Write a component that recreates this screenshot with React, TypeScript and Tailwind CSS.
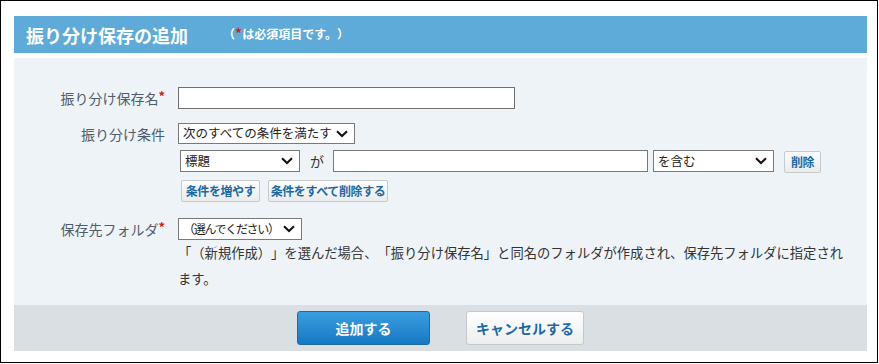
import React from 'react';

const Chevron = () => (
    <svg width="12" height="8" viewBox="0 0 12 8" className="shrink-0">
        <path d="M1 1.2 L6 6 L11 1.2" fill="none" stroke="#111" strokeWidth="2" />
    </svg>
);

const FakeSelect = ({ value, className, textClass = '' }: { value: string; className: string; textClass?: string }) => (
    <div
        className={`flex items-center justify-between bg-white border border-[#7a7a7a] pl-[4px] pr-[6px] text-[12.5px] text-[#222] leading-none whitespace-nowrap ${className}`}
    >
        <span className={textClass}>{value}</span>
        <Chevron />
    </div>
);

const SmallButton = ({ label, className }: { label: string; className: string }) => (
    <button
        className={`flex items-center justify-center h-[22px] rounded-[2px] border border-[#c6cacd] bg-gradient-to-b from-[#fdfdfd] to-[#e9ebec] text-[12px] tracking-[-0.4px] font-bold text-[#1b6aa5] leading-none whitespace-nowrap ${className}`}
    >
        {label}
    </button>
);

const Label = ({ text, required }: { text: string; required?: boolean }) => (
    <div className="w-[151px] shrink-0 text-right text-[14px] text-[#4f5d6b] leading-none whitespace-nowrap">
        {text}
        {required && <span className="relative -top-[3px] text-[13px] font-bold text-[#e3151b]">*</span>}
    </div>
);

export default function App() {
    return (
        <div className="w-[878px] h-[363px] border border-black bg-white pt-[15px] pl-[13px] font-[family-name:'Noto_Sans_CJK_JP',sans-serif] [text-spacing-trim:space-all]">
            <div className="w-[853px]">
                {/* Header */}
                <div className="h-[37px] bg-[#5eaad9] flex items-center pl-[12px]">
                    <h1 className="text-[18px] font-bold text-white leading-none">振り分け保存の追加</h1>
                    <span className="ml-[35px] text-[12px] font-bold text-white leading-none -mt-[4px]">
                        （<span className="text-[#e3151b] text-[14px]">*</span>は必須項目です。）
                    </span>
                </div>

                {/* Body */}
                <div className="mt-[5px] h-[247px] bg-[#eef3f7] pt-[29px]">
                    <div className="flex items-center">
                        <Label text="振り分け保存名" required />
                        <input className="ml-[13px] w-[337px] h-[22px] bg-white border border-[#6f6f6f] outline-none" />
                    </div>

                    <div className="flex mt-[14px]">
                        <div className="pt-[4px]">
                            <Label text="振り分け条件" />
                        </div>
                        <div className="ml-[13px] flex flex-col">
                            <FakeSelect value="次のすべての条件を満たす" className="w-[177px] h-[21px]" />
                            <div className="flex items-center mt-[5px] pl-[2px]">
                                <FakeSelect value="標題" className="w-[120px] h-[22px]" />
                                <span className="ml-[10px] text-[14px] text-[#333] leading-none">が</span>
                                <input className="ml-[9px] w-[315px] h-[22px] bg-white border border-[#7a7a7a] outline-none" />
                                <FakeSelect value="を含む" className="ml-[5px] w-[121px] h-[22px]" />
                                <SmallButton label="削除" className="ml-[10px] w-[37px] mt-[2px]" />
                            </div>
                            <div className="flex items-center gap-[8px] mt-[7px] pl-[3px]">
                                <SmallButton label="条件を増やす" className="w-[79px]" />
                                <SmallButton label="条件をすべて削除する" className="w-[120px]" />
                            </div>
                        </div>
                    </div>

                    <div className="flex mt-[16px]">
                        <div className="pt-[4px]">
                            <Label text="保存先フォルダ" required />
                        </div>
                        <div className="ml-[13px] flex flex-col">
                            <FakeSelect
                                value="（選んでください）"
                                className="w-[124px] h-[22px]"
                                textClass="text-[12px] tracking-[-1.3px]"
                            />
                            <p className="w-[675px] text-[13.3px] leading-[26px] text-[#333]">
                                「（新規作成）」を選んだ場合、「振り分け保存名」と同名のフォルダが作成され、保存先フォルダに指定されます。
                            </p>
                        </div>
                    </div>
                </div>

                {/* Footer */}
                <div className="h-[46px] bg-[#d9dfe3] flex items-center justify-center gap-[36px]">
                    <button className="w-[133px] h-[34px] rounded-[3px] border border-[#1c6aa6] bg-gradient-to-b from-[#3a9de0] to-[#1479c4] text-white text-[14px] font-bold leading-none">
                        追加する
                    </button>
                    <button className="w-[118px] h-[34px] rounded-[3px] border border-[#c3c8cc] bg-gradient-to-b from-white to-[#eceeef] text-[#1b6aa5] text-[14px] font-bold leading-none">
                        キャンセルする
                    </button>
                </div>
            </div>
        </div>
    );
}
